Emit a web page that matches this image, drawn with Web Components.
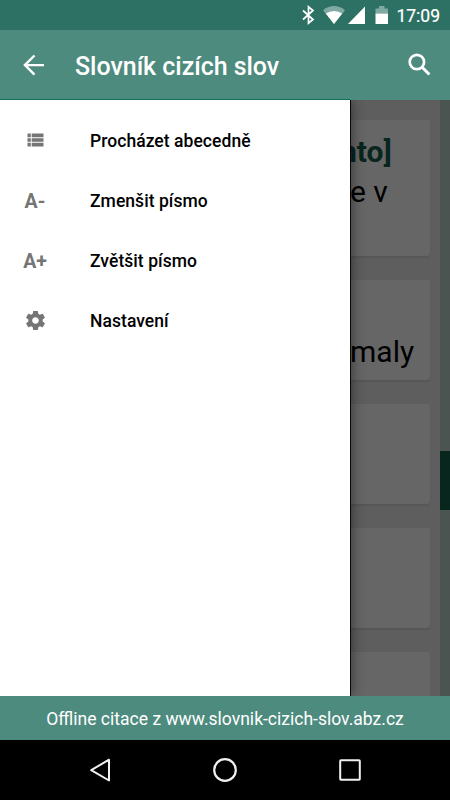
<!DOCTYPE html>
<html lang="cs">
<head>
<meta charset="utf-8">
<title>Slovník cizích slov</title>
<style>
html,body{margin:0;height:100%;overflow:hidden;background:#000}
body{font-family:Roboto,"Noto Sans",sans-serif}
</style>
</head>
<body>
<dictionary-app></dictionary-app>
<script>
function define(name, markup) {
  const template = document.createElement('template');
  template.innerHTML = markup;
  customElements.define(name, class extends HTMLElement {
    constructor() {
      super();
      this.attachShadow({mode: 'open'}).append(template.content.cloneNode(true));
    }
  });
}

define('status-bar', `
<style>
:host{display:flex;height:30px;box-sizing:border-box;background:#2c7163;color:#fff;justify-content:flex-end;padding-right:10px}
svg{display:block;width:90px;height:30px;flex:none}
time{font-size:17.5px;line-height:32px;margin-left:5px;font-weight:400;-webkit-text-stroke:.2px #fff}
</style>
<svg viewBox="300 0 90 30" fill="#fff">
  <path d="M302 10.5L312 19.5L307.5 23.2V6.8L312 10.5L302 19.5" fill="none" stroke="#fff" stroke-width="1.7"/>
  <path d="M322 10.2Q333 1.8 344 10.2L333 24Z" opacity=".4"/>
  <path d="M324.8 13.6Q333 8.2 341.2 13.6L333 24Z"/>
  <path d="M347 24L364 6.5V24Z"/>
  <path d="M374.5 13.5V8.5H378V6H383.5V8.5H387V13.5Z" opacity=".4"/>
  <path d="M374.5 13.5H387V24H374.5Z"/>
</svg>
<time>17:09</time>`);

define('app-toolbar', `
<style>
:host{display:flex;height:70px;box-sizing:border-box;align-items:center;background:#4d8b7e;color:#fff;padding:0 18px 0 22px;position:relative;z-index:2}
svg{width:25px;height:25px;fill:#fff;flex:none;display:block}
h1{margin:3px auto 0 28px;font-size:25px;font-weight:500;line-height:30px;white-space:nowrap;letter-spacing:-.04px}
</style>
<svg viewBox="0 0 25 25"><path d="M12.5 2.5L2.9 12.1L12.5 21.7M3 12.1H22" fill="none" stroke="#fff" stroke-width="2.4"/></svg>
<h1><slot></slot></h1>
<svg style="width:26px;height:26px" viewBox="0 0 26 26"><g fill="none" stroke="#fff" stroke-width="2.7"><circle cx="10.9" cy="10" r="7.2"/><path d="M15.6 14.7L23.4 22.5" stroke-width="3"/></g></svg>`);

define('menu-item', `
<style>
:host{display:grid;grid-template-columns:70px 1fr;column-gap:20px;height:60px;align-items:center;color:#000;font-size:17.5px;font-weight:500}
.icon{display:flex;justify-content:center;color:#757575;font-size:19.5px;font-weight:700;line-height:24px}
.label{line-height:24px;white-space:nowrap;padding-top:2px;letter-spacing:.05px}
::slotted(svg){display:block}
::slotted(span){padding-top:3px}
</style>
<span class="icon"><slot name="icon"></slot></span><span class="label"><slot></slot></span>`);

define('nav-drawer', `
<style>
:host{display:block;width:350px;height:596px;box-sizing:border-box;padding-top:10px;background:#fff;box-shadow:1px 0 0 #080808,2px 0 12px rgba(0,0,0,.45);position:relative;z-index:1}
</style>
<slot></slot>`);

define('entry-card', `
<style>
:host{display:block;height:100px;box-sizing:border-box;flex:none;background:#666;border-radius:0 3px 3px 0;box-shadow:0 2px 1px #575757;font-size:30px;line-height:40px;color:#000;white-space:nowrap}
</style>
<slot></slot>`);

define('entry-list', `
<style>
:host{display:flex;width:100px;height:596px;background:#5e5e5e}
.list{flex:1;display:flex;flex-direction:column;gap:24px;padding:20px 10px 0 0}
.track{width:10px;background:#4b5451;padding-top:351px;box-sizing:border-box}
.thumb{height:59px;background:#08251e}
.first{height:136px;padding-top:12px}
.second{padding-top:52px}
.last{height:44px;border-radius:0 3px 0 0;box-shadow:none}
.title{color:#08251e;font-weight:700;margin-left:-10px}
</style>
<div class="list">
  <entry-card class="first"><div class="title">nto]</div><div>e v</div></entry-card>
  <entry-card class="second"><div>maly</div></entry-card>
  <entry-card></entry-card><entry-card></entry-card><entry-card class="last"></entry-card>
</div>
<div class="track"><div class="thumb"></div></div>`);

define('citation-bar', `
<style>
:host{display:flex;height:44px;align-items:center;justify-content:center;background:#4d8b7e;color:#fff;font-size:17.55px;line-height:24px;position:relative;z-index:2}
span{margin-top:1px}
</style>
<span><slot></slot></span>`);

define('system-nav', `
<style>
:host{display:flex;height:60px;background:#000;justify-content:space-between;align-items:center;padding:0 87px}
svg{width:26px;height:26px;display:block;fill:none;stroke:#f0f0f0;stroke-width:2;stroke-linejoin:round}
</style>
<svg viewBox="0 0 26 26"><path d="M4.2 13.2L22 2.7V23.5Z"/></svg>
<svg viewBox="0 0 26 26"><circle cx="13" cy="13" r="10.8" stroke-width="2.2"/></svg>
<svg viewBox="0 0 26 26"><rect x="3.2" y="3.2" width="19.6" height="19.6" rx=".8"/></svg>`);

define('dictionary-app', `
<style>
:host{display:flex;flex-direction:column;width:450px;height:800px;overflow:hidden}
.body{display:flex;height:596px}
app-toolbar{background:linear-gradient(#12705f,#12705f) 0 100%/350px 1px no-repeat #4d8b7e}
</style>
<status-bar></status-bar>
<app-toolbar>Slovník cizích slov</app-toolbar>
<div class="body">
  <nav-drawer>
    <menu-item><svg slot="icon" width="17" height="14" viewBox="0 0 17 14" fill="#757575"><path d="M.5.5H3.8V4.2H.5ZM4.7.5H16.5V4.2H4.7ZM.5 5.2H3.8V8.8H.5ZM4.7 5.2H16.5V8.8H4.7ZM.5 9.8H3.8V13.5H.5ZM4.7 9.8H16.5V13.5H4.7Z"/></svg>Procházet abecedně</menu-item>
    <menu-item><span slot="icon">A-</span>Zmenšit písmo</menu-item>
    <menu-item><span slot="icon">A+</span>Zvětšit písmo</menu-item>
    <menu-item><svg slot="icon" width="23" height="23" viewBox="0 0 24 24" fill="#757575"><path d="M19.43 12.98c.04-.32.07-.64.07-.98s-.03-.66-.07-.98l2.11-1.65c.19-.15.24-.42.12-.64l-2-3.46c-.12-.22-.39-.3-.61-.22l-2.49 1c-.52-.4-1.08-.73-1.69-.98l-.38-2.65C14.46 2.18 14.25 2 14 2h-4c-.25 0-.46.18-.49.42l-.38 2.65c-.61.25-1.17.59-1.69.98l-2.49-1c-.23-.09-.49 0-.61.22l-2 3.46c-.13.22-.07.49.12.64l2.11 1.65c-.04.32-.07.65-.07.98s.03.66.07.98l-2.11 1.65c-.19.15-.24.42-.12.64l2 3.46c.12.22.39.3.61.22l2.49-1c.52.4 1.08.73 1.69.98l.38 2.65c.03.24.24.42.49.42h4c.25 0 .46-.18.49-.42l.38-2.65c.61-.25 1.17-.59 1.69-.98l2.49 1c.23.09.49 0 .61-.22l2-3.46c.12-.22.07-.49-.12-.64l-2.11-1.65zM12 15.5c-1.93 0-3.5-1.57-3.5-3.5s1.57-3.5 3.5-3.5 3.5 1.57 3.5 3.5-1.57 3.5-3.5 3.5z"/></svg>Nastavení</menu-item>
  </nav-drawer>
  <entry-list></entry-list>
</div>
<citation-bar>Offline citace z www.slovnik-cizich-slov.abz.cz</citation-bar>
<system-nav></system-nav>`);
</script>
</body>
</html>
